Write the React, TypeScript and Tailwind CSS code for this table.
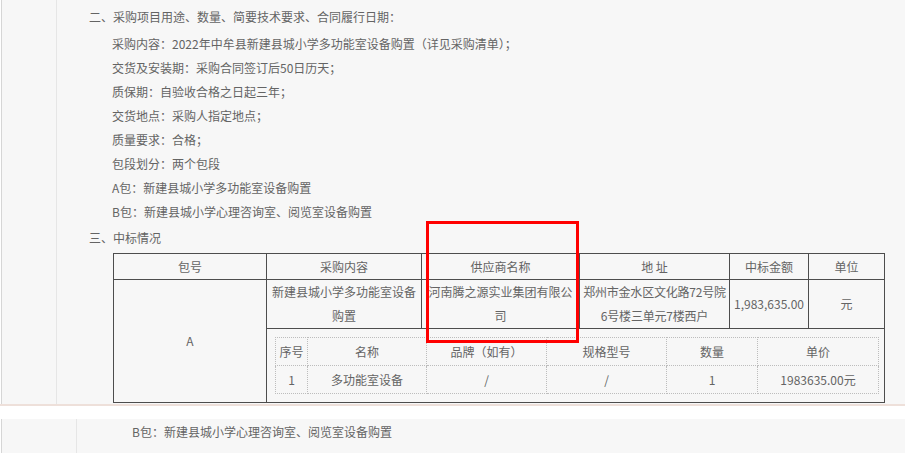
const intro = [
    "采购内容：2022年中牟县新建县城小学多功能室设备购置（详见采购清单）；",
    "交货及安装期：采购合同签订后50日历天；",
    "质保期：自验收合格之日起三年；",
    "交货地点：采购人指定地点；",
    "质量要求：合格；",
    "包段划分：两个包段",
    "A包：新建县城小学多功能室设备购置",
    "B包：新建县城小学心理咨询室、阅览室设备购置",
];

const headers = ["包号", "采购内容", "供应商名称", "地 址", "中标金额", "单位"];
const colWidths = ["w-[153px]", "w-[155px]", "w-[158px]", "w-[150px]", "w-[79px]", "w-[76px]"];

const itemHeaders = ["序号", "名称", "品牌（如有）", "规格型号", "数量", "单价"];
const itemRow = ["1", "多功能室设备", "/", "/", "1", "1983635.00元"];
const itemWidths = ["w-[32px]", "w-[119px]", "w-[120px]", "w-[120px]", "w-[91px]", "w-[121px]"];

const cell = "border border-[#4d4d4d] text-center align-middle leading-[24px] px-[3px]";
const dot = "border border-dotted border-[#bdbdbd] text-center align-middle leading-[24px] p-0";

export default function App() {
    return (
        <div
            className="w-[905px] h-[453px] overflow-hidden bg-white text-[12px] text-[#646464] relative"
            style={{ fontFamily: '"Noto Sans CJK SC", "Noto Sans", sans-serif' }}
        >
            {/* upper page */}
            <div className="ml-[1px] h-[404px] flex bg-[#f7f7f7] border-l border-[#d6d6d6]">
                <div className="w-[55px] shrink-0 border-r border-[#e6e6e6]" />
                <div className="flex-1 pl-[32px] pt-[5px]">
                    <div className="leading-[24px]">二、采购项目用途、数量、简要技术要求、合同履行日期：</div>
                    <div className="mt-[3px] pl-[23px]">
                        {intro.map((line, i) => (
                            <div key={i} className="leading-[24px]">{line}</div>
                        ))}
                    </div>
                    <div className="mt-[2px] leading-[24px]">三、中标情况</div>

                    <table className="mt-[3px] ml-[24px] w-[771px] table-fixed border-collapse">
                        <colgroup>
                            {colWidths.map((w, i) => (
                                <col key={i} className={w} />
                            ))}
                        </colgroup>
                        <tbody>
                            <tr className="h-[26px]">
                                {headers.map((h) => (
                                    <td key={h} className={cell}>{h}</td>
                                ))}
                            </tr>
                            <tr className="h-[49px]">
                                <td rowSpan={2} className={cell}>A</td>
                                <td className={cell}>新建县城小学多功能室设备购置</td>
                                <td className={cell}>河南腾之源实业集团有限公司</td>
                                <td className={cell + " px-0 tracking-[-0.2px]"}>郑州市金水区文化路72号院6号楼三单元7楼西户</td>
                                <td className={cell + " px-0"}>1,983,635.00</td>
                                <td className={cell}>元</td>
                            </tr>
                            <tr className="h-[74px]">
                                <td colSpan={5} className="border border-[#4d4d4d] pl-[8px] pr-[7px] align-middle">
                                    <table className="w-[603px] table-fixed border-collapse">
                                        <colgroup>
                                            {itemWidths.map((w, i) => (
                                                <col key={i} className={w} />
                                            ))}
                                        </colgroup>
                                        <tbody>
                                            <tr className="h-[28px]">
                                                {itemHeaders.map((h) => (
                                                    <td key={h} className={dot}>{h}</td>
                                                ))}
                                            </tr>
                                            <tr className="h-[28px]">
                                                {itemRow.map((v, i) => (
                                                    <td key={i} className={dot}>{v}</td>
                                                ))}
                                            </tr>
                                        </tbody>
                                    </table>
                                </td>
                            </tr>
                        </tbody>
                    </table>
                </div>
            </div>

            <div className="h-[2px] bg-[#eee0da]" />
            <div className="h-[13px] bg-white" />

            {/* lower page */}
            <div className="ml-[1px] h-[40px] flex bg-[#f7f7f7] border-l border-[#d6d6d6]">
                <div className="w-[75px] shrink-0 border-r border-[#e6e6e6]" />
                <div className="flex-1 pl-[55px] pt-[1px]">
                    <div className="leading-[24px]">B包：新建县城小学心理咨询室、阅览室设备购置</div>
                </div>
            </div>

            {/* highlight box */}
            <div className="absolute left-[426px] top-[221px] w-[153px] h-[122px] border-[3px] border-[#ff0000]" />
        </div>
    );
}
